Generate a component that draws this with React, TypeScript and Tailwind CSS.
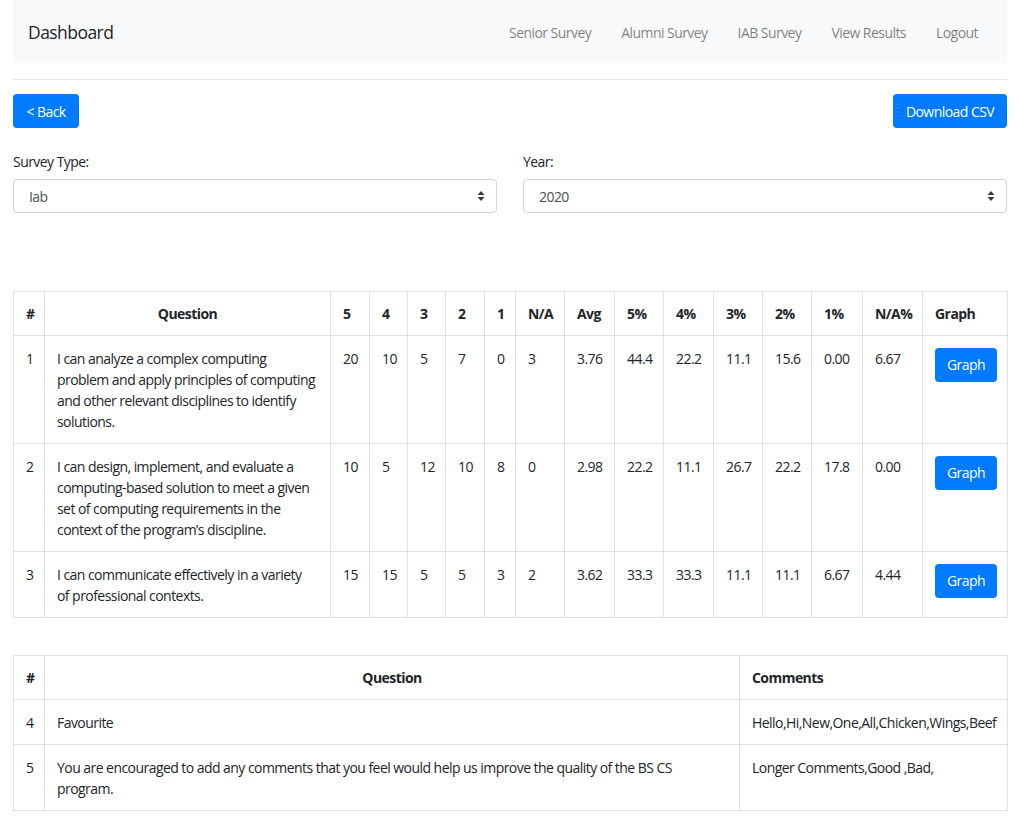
import React from 'react';

interface ScaleRow {
  id: number;
  question: string;
  counts: string[];
  avg: string;
  pct: string[];
}

const scaleRows: ScaleRow[] = [
  {
    id: 1,
    question:
      'I can analyze a complex computing problem and apply principles of computing and other relevant disciplines to identify solutions.',
    counts: ['20', '10', '5', '7', '0', '3'],
    avg: '3.76',
    pct: ['44.4', '22.2', '11.1', '15.6', '0.00', '6.67'],
  },
  {
    id: 2,
    question:
      "I can design, implement, and evaluate a computing-based solution to meet a given set of computing requirements in the context of the program\u2019s discipline.",
    counts: ['10', '5', '12', '10', '8', '0'],
    avg: '2.98',
    pct: ['22.2', '11.1', '26.7', '22.2', '17.8', '0.00'],
  },
  {
    id: 3,
    question: 'I can communicate effectively in a variety of professional contexts.',
    counts: ['15', '15', '5', '5', '3', '2'],
    avg: '3.62',
    pct: ['33.3', '33.3', '11.1', '11.1', '6.67', '4.44'],
  },
];

const commentRows = [
  { id: 4, question: 'Favourite', comments: 'Hello,Hi,New,One,All,Chicken,Wings,Beef' },
  {
    id: 5,
    question:
      'You are encouraged to add any comments that you feel would help us improve the quality of the BS CS program.',
    comments: 'Longer Comments,Good ,Bad,',
  },
];

const headers = ['5', '4', '3', '2', '1', 'N/A', 'Avg', '5%', '4%', '3%', '2%', '1%', 'N/A%'];
const colWidths = [31, 286, 39, 38, 38, 39, 31, 49, 50, 49, 50, 49, 49, 51, 60, 85];

function SelectBox({ value }: { value: string }) {
  return (
    <div className="flex h-[34px] items-center justify-between rounded border border-[#ced4da] bg-white pl-[15px] pr-[11px] text-[#495057]">
      <span>{value}</span>
      <svg width="8" height="12" viewBox="0 0 8 12">
        <path d="M4 1 L7.5 5 L0.5 5 Z" fill="#343a40" />
        <path d="M4 11 L7.5 7 L0.5 7 Z" fill="#343a40" />
      </svg>
    </div>
  );
}

export default function App() {
  const cell = 'border border-[#dee2e6] px-3 py-[11.5px] align-top';
  const head = 'border border-[#dee2e6] px-3 py-[11px] align-bottom font-bold text-left';

  return (
    <div
      className="min-h-screen bg-white px-[13px] text-[14px] leading-[21px] tracking-[-0.55px] text-[#212529]"
      style={{ fontFamily: '"Open Sans", "Noto Sans", sans-serif' }}
    >
      <nav className="flex h-[63px] items-center justify-between bg-[#f8f9fa] pl-[15px] pr-[14px] pt-[2px]">
        <span className="text-[17.5px] text-black/90">Dashboard</span>
        <ul className="flex">
          {['Senior Survey', 'Alumni Survey', 'IAB Survey', 'View Results', 'Logout'].map((l) => (
            <li key={l} className="px-[15px] text-black/50">
              {l}
            </li>
          ))}
        </ul>
      </nav>

      <hr className="mt-4 mb-[14px] border-t border-black/10" />

      <div className="flex justify-between">
        <button className="h-[34px] w-[66px] rounded bg-[#007bff] text-white">&lt; Back</button>
        <button className="h-[34px] w-[114px] rounded bg-[#007bff] text-white">Download CSV</button>
      </div>

      <div className="mt-[23px] grid grid-cols-2 gap-[26px]">
        <div>
          <label className="mb-[7px] block">Survey Type:</label>
          <SelectBox value="Iab" />
        </div>
        <div>
          <label className="mb-[7px] block">Year:</label>
          <SelectBox value="2020" />
        </div>
      </div>

      <table className="mt-[78px] w-full table-fixed border-collapse">
        <colgroup>
          {colWidths.map((w, i) => (
            <col key={i} style={{ width: w }} />
          ))}
        </colgroup>
        <thead>
          <tr>
            <th className={head}>#</th>
            <th className={head + ' !text-center'}>Question</th>
            {headers.map((h) => (
              <th key={h} className={head}>
                {h}
              </th>
            ))}
            <th className={head}>Graph</th>
          </tr>
        </thead>
        <tbody>
          {scaleRows.map((r) => (
            <tr key={r.id}>
              <td className={cell}>{r.id}</td>
              <td className={cell + ' !pr-[14px]'}>{r.question}</td>
              {r.counts.map((c, i) => (
                <td key={'c' + i} className={cell}>
                  {c}
                </td>
              ))}
              <td className={cell}>{r.avg}</td>
              {r.pct.map((p, i) => (
                <td key={'p' + i} className={cell}>
                  {p}
                </td>
              ))}
              <td className={cell}>
                <button className="block h-[34px] w-[62px] rounded bg-[#007bff] text-white">Graph</button>
              </td>
            </tr>
          ))}
        </tbody>
      </table>

      <table className="mt-[37px] mb-4 w-full table-fixed border-collapse">
        <colgroup>
          <col style={{ width: 31 }} />
          <col style={{ width: 695 }} />
          <col style={{ width: 268 }} />
        </colgroup>
        <thead>
          <tr>
            <th className={head}>#</th>
            <th className={head + ' !text-center'}>Question</th>
            <th className={head}>Comments</th>
          </tr>
        </thead>
        <tbody>
          {commentRows.map((r) => (
            <tr key={r.id}>
              <td className={cell}>{r.id}</td>
              <td className={cell}>{r.question}</td>
              <td className={cell}>{r.comments}</td>
            </tr>
          ))}
        </tbody>
      </table>
    </div>
  );
}
